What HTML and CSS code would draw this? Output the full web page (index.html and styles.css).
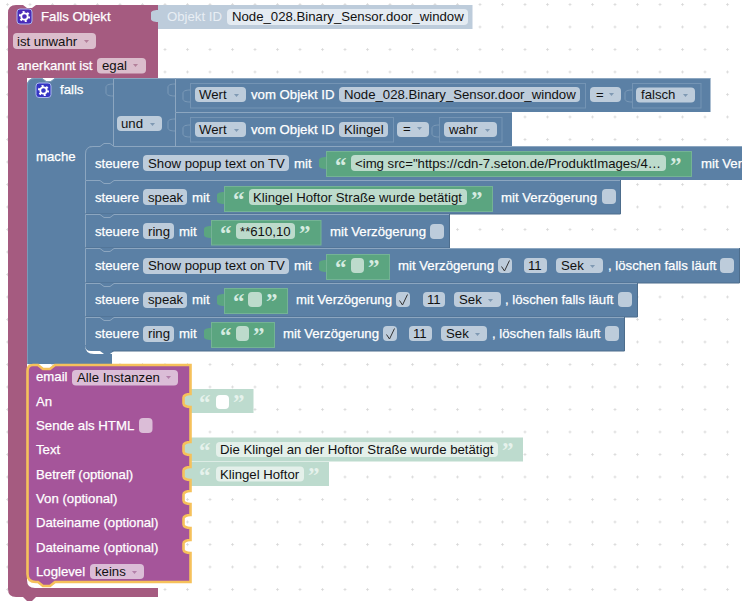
FILE: index.html
```html
<!DOCTYPE html>
<html lang="de">
<head>
    <meta charset="UTF-8">
    <title>Blockly Skript</title>
    <link rel="stylesheet" href="styles.css">
</head>
<body>
<svg class="workspace" width="742" height="602" viewBox="0 0 742 602" xmlns="http://www.w3.org/2000/svg">
    <defs>
        <pattern id="grid" x="6" y="3" width="22.5" height="22.5" patternUnits="userSpaceOnUse">
            <path class="grid-dot" d="M0 1.5H3M1.5 0V3"/>
        </pattern>
        <g id="gear">
            <circle class="gear-teeth" cx="7.5" cy="7.5" r="4.6"/>
            <circle class="gear-ring" cx="7.5" cy="7.5" r="3.2"/>
        </g>
    </defs>
    <rect class="grid" width="742" height="602"/>

    <!-- Falls Objekt -->
    <path class="pink" d="M8 13Q8 5 16 5H23l4 3h5l4-3H158V78H27V580Q27 588 35 588H158V597H36l-4 4h-5l-4-4H16Q8 597 8 589Z"/>
    <rect class="gear-box pur" x="17" y="9" width="15" height="15" rx="3"/>
    <use href="#gear" x="17" y="9"/>
    <text class="lbl" x="41" y="21">Falls Objekt</text>
    <rect class="f-pink" x="13" y="33" width="83" height="16" rx="4"/>
    <text class="val" x="17" y="46">ist unwahr</text>
    <path class="arrow-pink" d="M84 40h5l-2.500 3Z"/>
    <text class="lbl" x="17" y="70">anerkannt ist</text>
    <rect class="f-pink" x="97" y="58" width="49" height="15.500" rx="4"/>
    <text class="val" x="102" y="70">egal</text>
    <path class="arrow-pink" d="M133 64h5l-2.500 3Z"/>

    <path class="shadow-blue" d="M158 5H472.500V29H158V22c-4 0-7-1-7-3V13c0-2 3-3 7-3Z"/>
    <text class="lbl-pale" x="167" y="21">Objekt ID</text>
    <rect class="f-pale" x="227" y="9" width="241" height="16" rx="4"/>
    <text class="val" x="232" y="21">Node_028.Binary_Sensor.door_window</text>

    <!-- falls / mache -->
    <path class="blue" d="M27 86Q27 78 35 78H42l4 3h5l4-3H113V146H94Q85 146 85 155V345Q85 354 94 354H112V364H27Z"/>
    <path class="edge-soft" d="M27.500 364V86Q27.500 78.500 35 78.500H42l4 3h5l4-3H113"/>
    <rect class="gear-box ind" x="36" y="83" width="15" height="14.500" rx="3"/>
    <use href="#gear" x="36" y="83"/>
    <text class="lbl" x="60" y="94">falls</text>
    <text class="lbl" x="36" y="161">mache</text>

    <!-- und -->
    <rect class="blue" x="113" y="78" width="62" height="68"/>
    <path class="edge" d="M113.500 146V78.500H175"/>
    <path class="tab-in" d="M113 84c-4 0-7 1-7 3v6c0 2 3 3 7 3"/>
    <rect class="f-blue" x="117" y="116" width="45" height="15" rx="4"/>
    <text class="val" x="121" y="128">und</text>
    <path class="arrow-blue" d="M150 123h5l-2.500 3Z"/>

    <!-- Vergleich 1 -->
    <rect class="blue" x="175" y="78" width="535.500" height="34"/>
    <path class="edge" d="M175.500 112V78.500H710"/>
    <path class="tab-in" d="M175 84c-4 0-7 1-7 3v6c0 2 3 3 7 3"/>
    <path class="tab-in" d="M190 90c-4 0-7 1-7 3v6c0 2 3 3 7 3"/>
    <rect class="inner" x="190.500" y="83.500" width="395" height="24.500"/>
    <rect class="f-blue" x="195" y="87" width="51" height="15" rx="4"/>
    <text class="val" x="199" y="99">Wert</text>
    <path class="arrow-blue" d="M234 94h5l-2.500 3Z"/>
    <text class="lbl" x="251" y="99">vom Objekt ID</text>
    <rect class="f-blue" x="339" y="87" width="241" height="15" rx="4"/>
    <text class="val" x="344" y="99">Node_028.Binary_Sensor.door_window</text>
    <rect class="f-blue" x="590" y="87" width="31" height="15" rx="4"/>
    <text class="val" x="596" y="99">=</text>
    <path class="arrow-blue" d="M609 93h5l-2.500 3Z"/>
    <path class="tab-in" d="M632 90c-4 0-7 1-7 3v6c0 2 3 3 7 3"/>
    <rect class="inner" x="632.500" y="83.500" width="68.500" height="24.500"/>
    <rect class="f-blue" x="636" y="87.500" width="59" height="15" rx="4"/>
    <text class="val" x="641" y="99">falsch</text>
    <path class="arrow-blue" d="M683 94h5l-2.500 3Z"/>

    <!-- Vergleich 2 -->
    <rect class="blue" x="175" y="112" width="337" height="34"/>
    <path class="edge" d="M175.500 146V112.500H512"/>
    <path class="tab-in" d="M175 119c-4 0-7 1-7 3v6c0 2 3 3 7 3"/>
    <path class="tab-in" d="M190 125c-4 0-7 1-7 3v6c0 2 3 3 7 3"/>
    <rect class="inner" x="190.500" y="117.500" width="203" height="24.500"/>
    <rect class="f-blue" x="195" y="122" width="51" height="15" rx="4"/>
    <text class="val" x="199" y="134">Wert</text>
    <path class="arrow-blue" d="M234 129h5l-2.500 3Z"/>
    <text class="lbl" x="251" y="134">vom Objekt ID</text>
    <rect class="f-blue" x="339" y="122" width="49" height="15" rx="4"/>
    <text class="val" x="344" y="134">Klingel</text>
    <rect class="f-blue" x="397" y="122" width="32" height="15" rx="4"/>
    <text class="val" x="403" y="133">=</text>
    <path class="arrow-blue" d="M417 127h5l-2.500 3Z"/>
    <path class="tab-in" d="M439 125c-4 0-7 1-7 3v6c0 2 3 3 7 3"/>
    <rect class="inner" x="439.500" y="117.500" width="62.500" height="24.500"/>
    <rect class="f-blue" x="444" y="122" width="53" height="15" rx="4"/>
    <text class="val" x="449" y="134">wahr</text>
    <path class="arrow-blue" d="M485 129h5l-2.500 3Z"/>

    <!-- steuere 1 -->
    <path class="blue" d="M85 154Q85 146 93 146H742V180H85Z"/>
    <path class="edge" d="M85.500 180V154Q85.500 146.500 93 146.500H100l4-3h6l4 3H742"/>
    <text class="lbl" x="95" y="168">steuere</text>
    <rect class="f-blue" x="143" y="155" width="146" height="16" rx="4"/>
    <text class="val" x="148" y="168">Show popup text on TV</text>
    <text class="lbl" x="294" y="168">mit</text>
    <path class="tab-green" d="M326 157c-4 0-7 1-7 3v6c0 2 3 3 7 3"/>
    <rect class="green" x="326.500" y="151.500" width="365" height="25"/>
    <text class="quote" x="335" y="173">“</text>
    <rect class="f-green" x="351" y="155" width="315" height="16" rx="4"/>
    <text class="val" x="355" y="168">&lt;img src="https://cdn-7.seton.de/ProduktImages/4…</text>
    <text class="quote" x="670" y="173">”</text>
    <text class="lbl" x="701" y="168">mit Verzögerung</text>

    <!-- steuere 2 -->
    <path class="blue" d="M85 180H620.500V214H85Z"/>
    <path class="edge" d="M85.500 214V180.500H100l4 3h6l4-3H620"/>
    <path class="dark" d="M620.500 180V214H85"/>
    <text class="lbl" x="95" y="202">steuere</text>
    <rect class="f-blue" x="143" y="189" width="44" height="16" rx="4"/>
    <text class="val" x="148" y="202">speak</text>
    <text class="lbl" x="192" y="202">mit</text>
    <path class="tab-green" d="M224 192c-4 0-7 1-7 3v6c0 2 3 3 7 3"/>
    <rect class="green" x="224.500" y="186.500" width="268" height="25"/>
    <text class="quote" x="233" y="207">“</text>
    <rect class="f-green" x="249" y="189" width="218" height="16" rx="4"/>
    <text class="val" x="253" y="202">Klingel Hoftor Straße wurde betätigt</text>
    <text class="quote" x="471" y="207">”</text>
    <text class="lbl" x="501" y="202">mit Verzögerung</text>
    <rect class="f-blue" x="602" y="189" width="14" height="15" rx="4"/>

    <!-- steuere 3 -->
    <path class="blue" d="M85 214H449V248H85Z"/>
    <path class="edge" d="M85.500 248V214.500H100l4 3h6l4-3H449"/>
    <path class="dark" d="M449.500 214V248H85"/>
    <text class="lbl" x="95" y="236">steuere</text>
    <rect class="f-blue" x="143" y="223" width="31" height="16" rx="4"/>
    <text class="val" x="148" y="236">ring</text>
    <text class="lbl" x="179" y="236">mit</text>
    <path class="tab-green" d="M211 226c-4 0-7 1-7 3v6c0 2 3 3 7 3"/>
    <rect class="green" x="211.500" y="220.500" width="109.500" height="24.500"/>
    <text class="quote" x="220" y="241">“</text>
    <rect class="f-green" x="236" y="223" width="59" height="16" rx="4"/>
    <text class="val" x="240" y="236">**610,10</text>
    <text class="quote" x="299" y="241">”</text>
    <text class="lbl" x="330" y="236">mit Verzögerung</text>
    <rect class="f-blue" x="430" y="224" width="14" height="15" rx="4"/>

    <!-- steuere 4 -->
    <path class="blue" d="M85 248H739V283H85Z"/>
    <path class="edge" d="M85.500 283V248.500H100l4 3h6l4-3H739"/>
    <path class="dark" d="M739.500 248V283H85"/>
    <text class="lbl" x="95" y="270">steuere</text>
    <rect class="f-blue" x="143" y="258" width="146" height="16" rx="4"/>
    <text class="val" x="148" y="270">Show popup text on TV</text>
    <text class="lbl" x="294" y="270">mit</text>
    <path class="tab-green" d="M326 260c-4 0-7 1-7 3v6c0 2 3 3 7 3"/>
    <rect class="green" x="326.500" y="254.500" width="63" height="25"/>
    <text class="quote" x="335" y="275">“</text>
    <rect class="f-green" x="351" y="258" width="13" height="15" rx="4"/>
    <text class="quote" x="368" y="275">”</text>
    <text class="lbl" x="398" y="270">mit Verzögerung</text>
    <rect class="f-blue" x="498" y="258" width="14" height="15" rx="4"/>
    <path class="tick" d="M501.500 266.500l3 4.500 5-10.500"/>
    <rect class="f-blue" x="524" y="258" width="23" height="15" rx="4"/>
    <text class="val" x="528" y="270">11</text>
    <rect class="f-blue" x="556" y="258" width="47" height="15" rx="4"/>
    <text class="val" x="561" y="270">Sek</text>
    <path class="arrow-blue" d="M590 265h5l-2.500 3Z"/>
    <text class="lbl" x="608" y="270">, löschen falls läuft</text>
    <rect class="f-blue" x="720" y="258" width="14" height="15" rx="4"/>

    <!-- steuere 5 -->
    <path class="blue" d="M85 283H637.500V317H85Z"/>
    <path class="edge" d="M85.500 317V283.500H100l4 3h6l4-3H637"/>
    <path class="dark" d="M637.500 283V317H85"/>
    <text class="lbl" x="95" y="304">steuere</text>
    <rect class="f-blue" x="143" y="292" width="44" height="16" rx="4"/>
    <text class="val" x="148" y="304">speak</text>
    <text class="lbl" x="192" y="304">mit</text>
    <path class="tab-green" d="M224 294c-4 0-7 1-7 3v6c0 2 3 3 7 3"/>
    <rect class="green" x="224.500" y="288.500" width="63" height="25"/>
    <text class="quote" x="233" y="309">“</text>
    <rect class="f-green" x="248" y="292" width="14" height="15" rx="4"/>
    <text class="quote" x="266" y="309">”</text>
    <text class="lbl" x="296" y="304">mit Verzögerung</text>
    <rect class="f-blue" x="396" y="292" width="14" height="15" rx="4"/>
    <path class="tick" d="M399.500 300.500l3 4.500 5-10.500"/>
    <rect class="f-blue" x="423" y="292" width="22" height="15" rx="4"/>
    <text class="val" x="427" y="304">11</text>
    <rect class="f-blue" x="454" y="292" width="47" height="15" rx="4"/>
    <text class="val" x="459" y="304">Sek</text>
    <path class="arrow-blue" d="M488 299h5l-2.500 3Z"/>
    <text class="lbl" x="505" y="304">, löschen falls läuft</text>
    <rect class="f-blue" x="618" y="292" width="14" height="15" rx="4"/>

    <!-- steuere 6 -->
    <path class="blue" d="M85 317H624V351H91Q85 351 85 345Z"/>
    <path class="blue" d="M100 351h14l-4 3h-6Z"/>
    <path class="edge" d="M85.500 345V317.500H100l4 3h6l4-3H624"/>
    <path class="dark" d="M624.500 317V351H112"/>
    <text class="lbl" x="95" y="338">steuere</text>
    <rect class="f-blue" x="143" y="326" width="31" height="16" rx="4"/>
    <text class="val" x="148" y="338">ring</text>
    <text class="lbl" x="179" y="338">mit</text>
    <path class="tab-green" d="M211 328c-4 0-7 1-7 3v6c0 2 3 3 7 3"/>
    <rect class="green" x="211.500" y="322.500" width="63" height="25"/>
    <text class="quote" x="220" y="343">“</text>
    <rect class="f-green" x="236" y="326" width="13" height="15" rx="4"/>
    <text class="quote" x="253" y="343">”</text>
    <text class="lbl" x="283" y="338">mit Verzögerung</text>
    <rect class="f-blue" x="383" y="326" width="14" height="15" rx="4"/>
    <path class="tick" d="M386.500 334.500l3 4.500 5-10.500"/>
    <rect class="f-blue" x="409" y="326" width="23" height="15" rx="4"/>
    <text class="val" x="413" y="338">11</text>
    <rect class="f-blue" x="441" y="326" width="46" height="15" rx="4"/>
    <text class="val" x="446" y="338">Sek</text>
    <path class="arrow-blue" d="M475 333h5l-2.500 3Z"/>
    <text class="lbl" x="492" y="338">, löschen falls läuft</text>
    <rect class="f-blue" x="605" y="326" width="14" height="15" rx="4"/>

    <!-- Text-Bloecke an der email -->
    <rect class="shadow-green" x="180" y="389" width="73.500" height="24"/>
    <text class="quote-pale" x="199" y="410">“</text>
    <rect class="f-white" x="216" y="395" width="13" height="14" rx="4"/>
    <text class="quote-pale" x="233" y="410">”</text>

    <rect class="shadow-green" x="180" y="437.500" width="343" height="24"/>
    <text class="quote-pale" x="199" y="458">“</text>
    <rect class="f-pale-green" x="216" y="442" width="282" height="15" rx="4"/>
    <text class="val" x="220" y="454">Die Klingel an der Hoftor Straße wurde betätigt</text>
    <text class="quote-pale" x="502" y="458">”</text>

    <rect class="shadow-green" x="180" y="462" width="149" height="24"/>
    <text class="quote-pale" x="199" y="483">“</text>
    <rect class="f-pale-green" x="216" y="466.500" width="88" height="15" rx="4"/>
    <text class="val" x="220" y="479">Klingel Hoftor</text>
    <text class="quote-pale" x="308" y="483">”</text>

    <!-- email -->
    <path class="email" d="M27.500 371Q27.500 365 33 365H38l5 4h7l5-4H190.500V394c-4 0-7 1.500-7 3.500v6c0 2 3 3.500 7 3.500V442c-4 0-7 1.500-7 3.500v6c0 2 3 3.500 7 3.500V467c-4 0-7 1.500-7 3.500v6c0 2 3 3.500 7 3.500V491c-4 0-7 1.500-7 3.500v6c0 2 3 3.500 7 3.500V515c-4 0-7 1.500-7 3.500v6c0 2 3 3.500 7 3.500V540c-4 0-7 1.500-7 3.500v6c0 2 3 3.500 7 3.500V582H55l-5 4h-7l-5-4H36Q27.500 582 27.500 574Z"/>
    <text class="lbl" x="36" y="381">email</text>
    <rect class="f-email" x="72" y="370" width="106" height="15.500" rx="4"/>
    <text class="val" x="77" y="382">Alle Instanzen</text>
    <path class="arrow-email" d="M166 376h5l-2.500 3Z"/>
    <text class="lbl" x="36" y="406">An</text>
    <text class="lbl" x="36" y="430">Sende als HTML</text>
    <rect class="f-email" x="139" y="418" width="13.500" height="15" rx="4"/>
    <text class="lbl" x="36" y="454">Text</text>
    <text class="lbl" x="36" y="479">Betreff (optional)</text>
    <text class="lbl" x="36" y="503">Von (optional)</text>
    <text class="lbl" x="36" y="527">Dateiname (optional)</text>
    <text class="lbl" x="36" y="552">Dateiname (optional)</text>
    <text class="lbl" x="36" y="576">Loglevel</text>
    <rect class="f-email" x="90" y="564" width="54" height="15" rx="4"/>
    <text class="val" x="95" y="576">keins</text>
    <path class="arrow-email" d="M132 571h5l-2.500 3Z"/>
</svg>
</body>
</html>
```

FILE: styles.css
```css
body {
    margin: 0;
    background: #fff;
}

.workspace {
    display: block;
    font-family: "Liberation Sans", Arial, sans-serif;
    font-size: 13.2px;
}

.grid {
    fill: url(#grid);
}

.grid-dot {
    stroke: #d8d8d8;
    stroke-width: 0.8;
    fill: none;
}

.lbl {
    fill: #fff;
    stroke: #fff;
    stroke-width: 0.25;
}

.lbl-pale {
    fill: #e8eef4;
}

.val {
    fill: #111;
}

.quote,
.quote-pale {
    font-family: "Liberation Serif", serif;
    font-size: 23px;
    font-weight: bold;
}

.quote {
    fill: #d5ebe0;
}

.quote-pale {
    fill: #e6f2ec;
}

/* blocks */
.pink {
    fill: #a55b80;
}

.blue {
    fill: #5b80a5;
}

.email {
    fill: #a5559a;
    stroke: #f6c15b;
    stroke-width: 2.6;
}

.green {
    fill: #5ba580;
    stroke: #74b395;
}

.shadow-blue {
    fill: #bdccdb;
}

.shadow-green {
    fill: #bddbce;
}

.inner {
    fill: #5b80a5;
    stroke: #7494b4;
}

.edge {
    fill: none;
    stroke: #8ca6c0;
}

.edge-soft {
    fill: none;
    stroke: #7c9ab8;
}

.dark {
    fill: none;
    stroke: #4d6d8c;
}

.tab-in {
    fill: #5b80a5;
    stroke: #7c9ab8;
}

.tab-green {
    fill: #5ba580;
}

/* fields */
.f-blue {
    fill: #bdccdb;
}

.f-pink {
    fill: #dbbdcc;
}

.f-green {
    fill: #bddbcc;
}

.f-pale {
    fill: #e4ebf2;
}

.f-pale-green {
    fill: #e4f0ea;
}

.f-white {
    fill: #fff;
}

.f-email {
    fill: #dbbdd7;
}

.arrow-blue {
    fill: #7f99b3;
}

.arrow-pink {
    fill: #b3809a;
}

.arrow-email {
    fill: #b380aa;
}

.tick {
    fill: none;
    stroke: #333;
    stroke-width: 1;
}

/* gear icons */
.gear-box {
    stroke: #a9b6ee;
    stroke-width: 1;
}

.pur {
    fill: #4a2ab8;
}

.ind {
    fill: #3434c4;
}

.gear-teeth {
    fill: none;
    stroke: #fff;
    stroke-width: 2;
    stroke-dasharray: 2 2.800;
}

.gear-ring {
    fill: none;
    stroke: #fff;
    stroke-width: 1.800;
}
```
